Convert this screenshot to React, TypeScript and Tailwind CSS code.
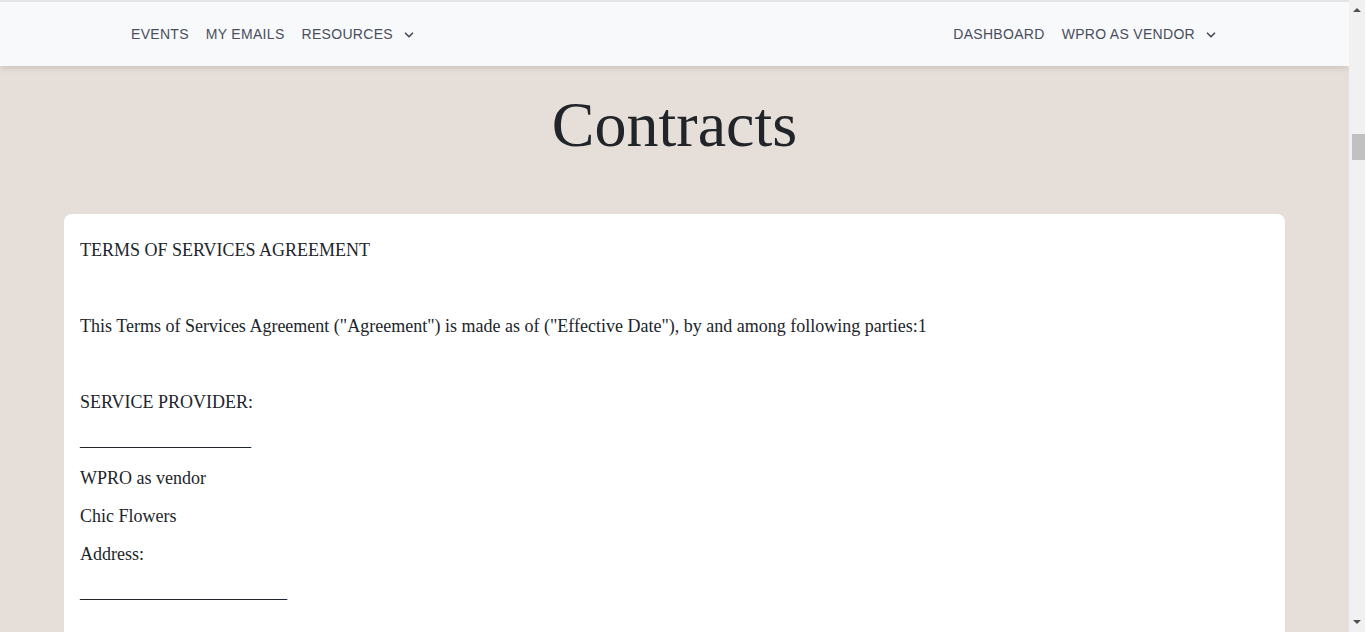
import React from "react"
import { ChevronDown } from "lucide-react"

const NavLink: React.FC<{ label: string; dropdown?: boolean }> = ({ label, dropdown }) => (
  <a href="#" className="flex items-center gap-[9px] text-[14px] tracking-[0.3px] text-[#4a4e5c] hover:text-black">
    <span>{label}</span>
    {dropdown && <ChevronDown className="h-[14px] w-[14px] mt-[1px]" strokeWidth={3} />}
  </a>
)

const Para: React.FC<{ children?: React.ReactNode }> = ({ children }) => (
  <p className="leading-[22px] mb-4">{children ?? "\u00a0"}</p>
)

const line = (n: number) => "_".repeat(n)

// window scrollbar, drawn since the headless shot hides the native one
const ScrollTrack = () => (
  <div className="w-4 shrink-0 h-screen bg-[#f1f1f1] flex flex-col items-center justify-between py-[8px]">
    <div className="flex flex-col items-center w-full">
      <div className="w-0 h-0 border-x-[4px] border-x-transparent border-b-[4px] border-b-[#505050]" />
      <div className="mt-[122px] w-[13px] ml-[2px] h-[26px] bg-[#c1c1c1]" />
    </div>
    <div className="w-0 h-0 border-x-[4px] border-x-transparent border-t-[4px] border-t-[#505050]" />
  </div>
)

export default function App() {
  return (
    <div className="h-screen flex overflow-hidden bg-[#e6dfd9]">
      <div className="flex-1 min-w-0 overflow-hidden font-['Liberation_Serif',serif] text-[#212529]">
        <header className="relative z-10 bg-[#f8f9fa] border-t-2 border-[#e4e4e4] shadow-[0_2px_6px_rgba(0,0,0,0.12)] font-['Liberation_Sans',Arial,sans-serif]">
          <div className="mx-auto max-w-[1111px] px-3 h-[64px] flex items-center justify-between">
            <nav className="flex items-center gap-[17px]">
              <NavLink label="EVENTS" />
              <NavLink label="MY EMAILS" />
              <NavLink label="RESOURCES" dropdown />
            </nav>
            <nav className="flex items-center gap-[17px]">
              <NavLink label="DASHBOARD" />
              <NavLink label="WPRO AS VENDOR" dropdown />
            </nav>
          </div>
        </header>

        <main className="px-16 pb-16">
          <h1 className="mt-[21px] text-center text-[64px] leading-[1.2]">Contracts</h1>

          <section className="mt-[50px] bg-white rounded-lg px-4 pt-[25px] pb-8 text-[18px]">
            <Para>TERMS OF SERVICES AGREEMENT</Para>
            <Para />
            <Para>
              This Terms of Services Agreement ("Agreement") is made as of ("Effective Date"), by and among following parties:1
            </Para>
            <Para />
            <Para>SERVICE PROVIDER:</Para>
            <Para>{line(19)}</Para>
            <Para>WPRO as vendor</Para>
            <Para>Chic Flowers</Para>
            <Para>Address:</Para>
            <Para>{line(23)}</Para>
            <Para />
            <Para>CLIENT:</Para>
            <Para>{line(19)}</Para>
            <Para>Name:</Para>
            <Para>Address:</Para>
            <Para>{line(23)}</Para>
          </section>
        </main>
      </div>
      <ScrollTrack />
    </div>
  )
}
